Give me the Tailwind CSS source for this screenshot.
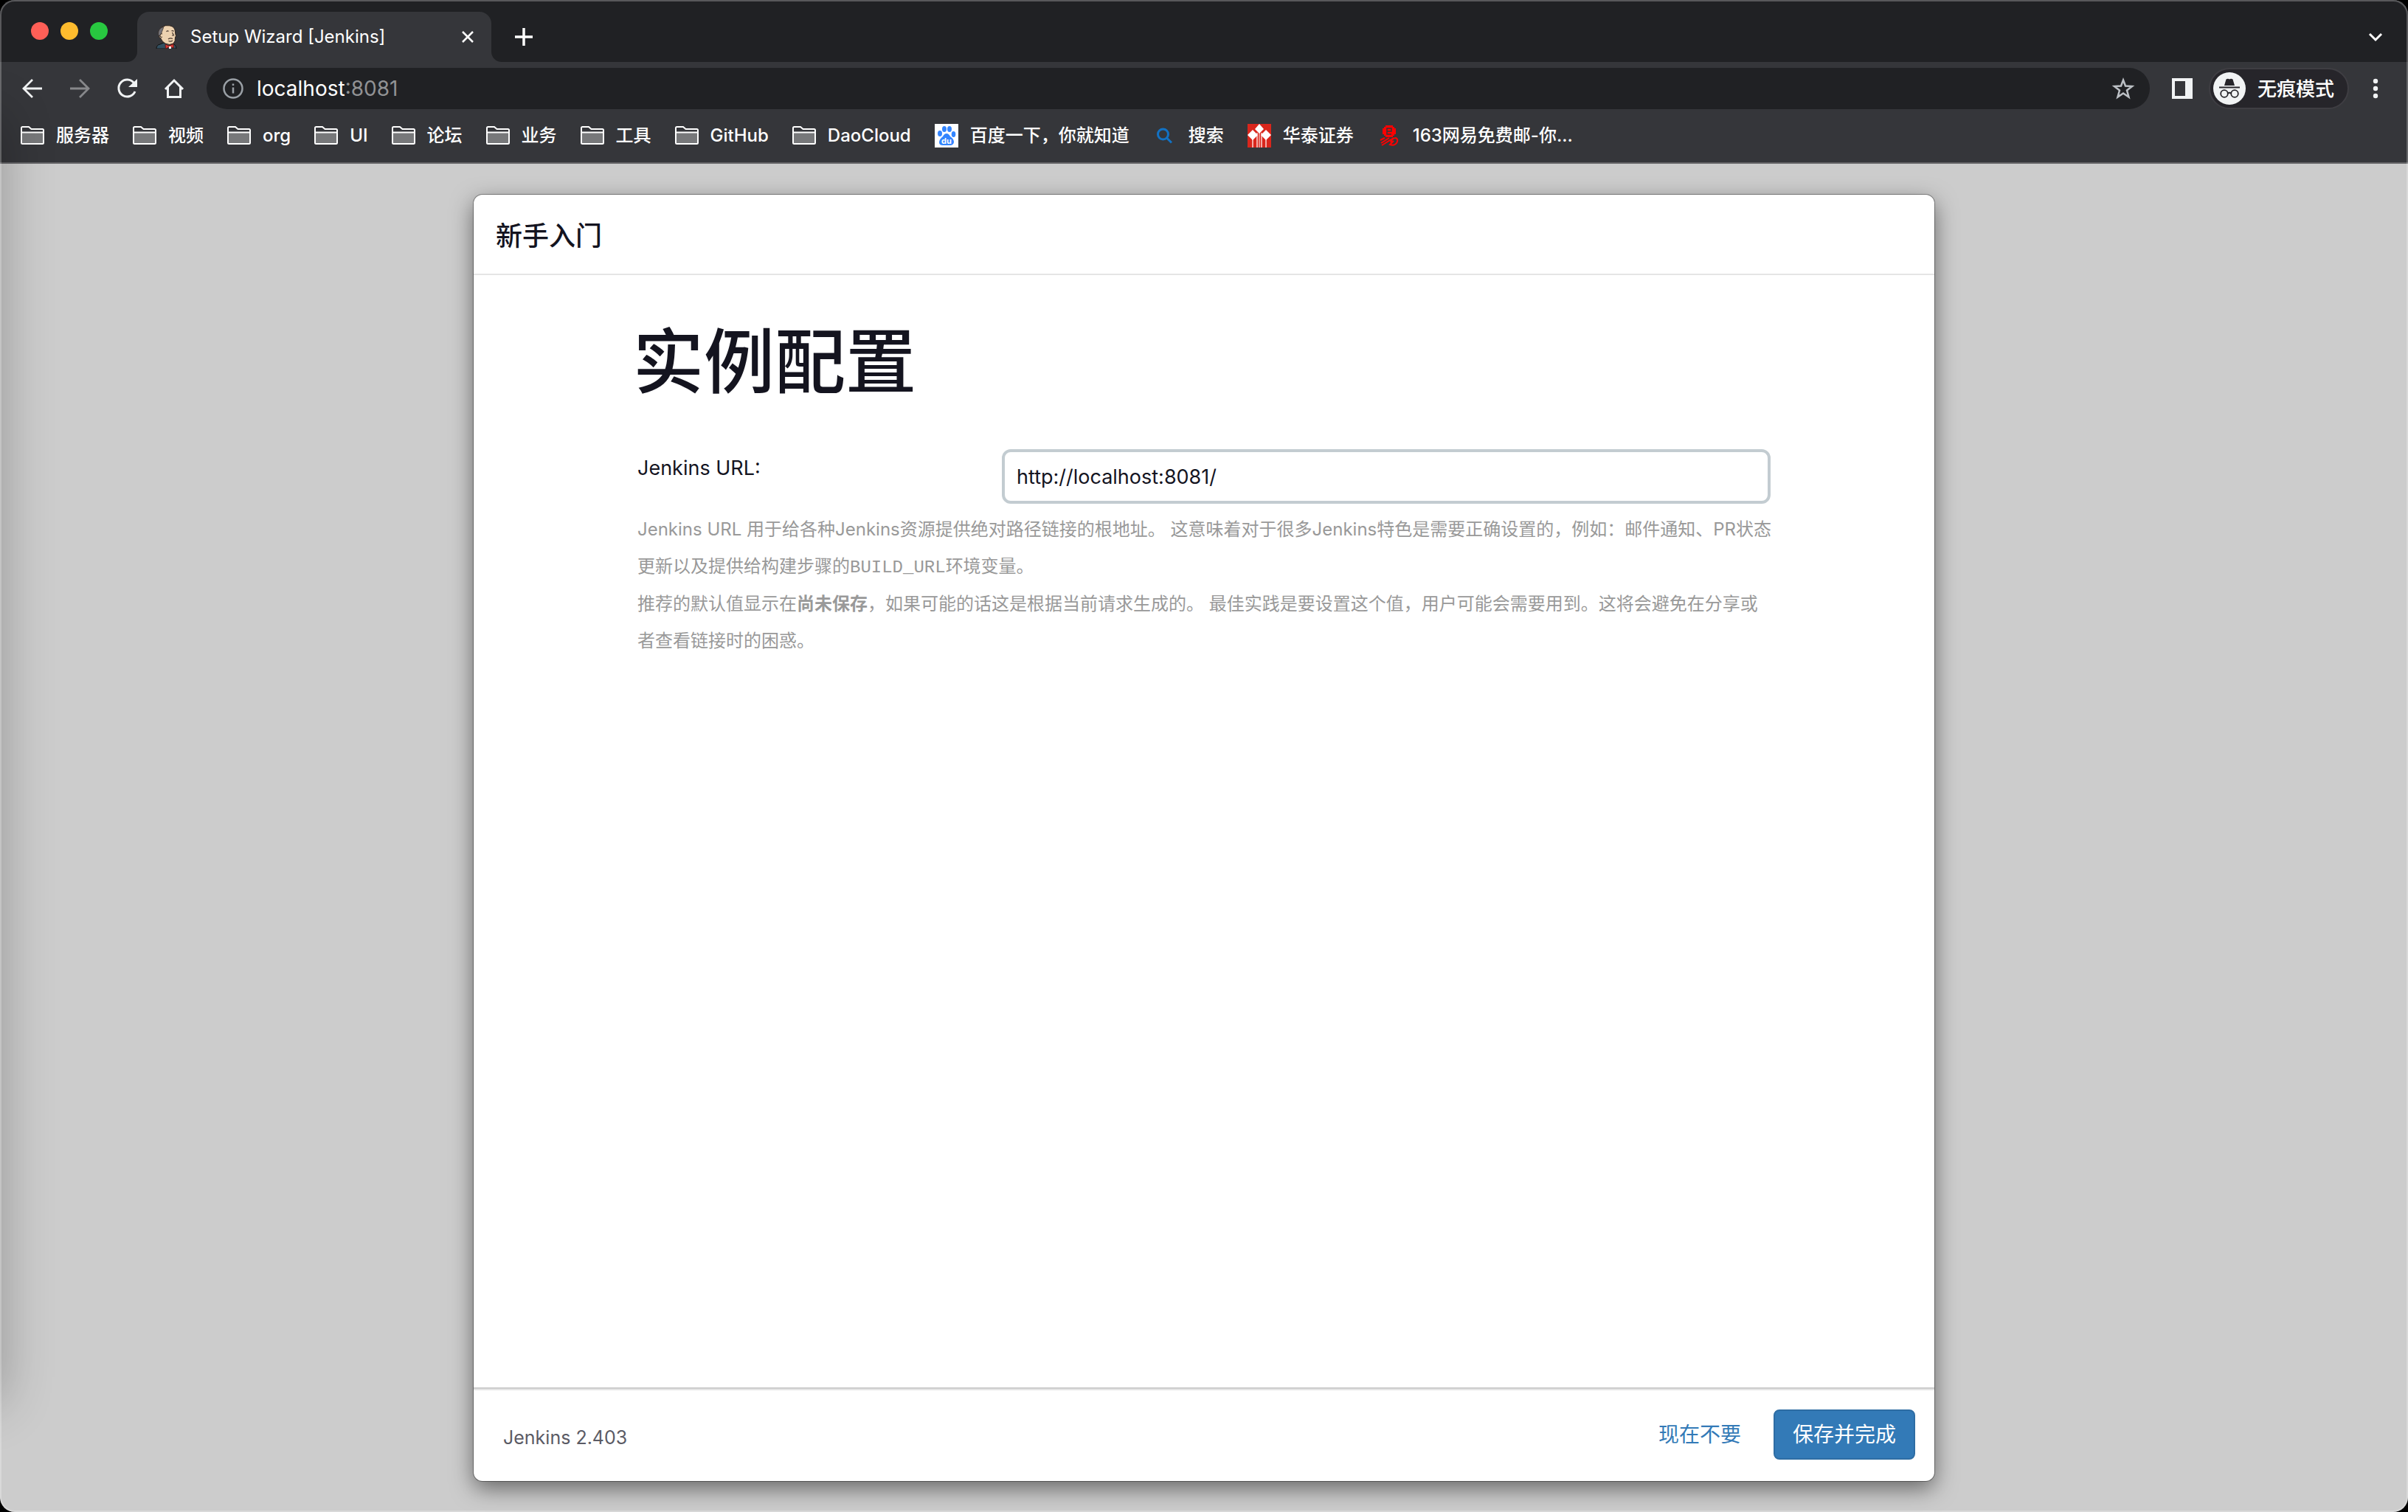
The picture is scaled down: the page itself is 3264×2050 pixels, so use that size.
<!DOCTYPE html>
<html lang="zh-CN">
<head>
<meta charset="utf-8">
<title>Setup Wizard [Jenkins]</title>
<script src="https://cdn.jsdelivr.net/npm/@tailwindcss/browser@4"></script>
</head>
<body class="bg-black font-['Inter','Noto_Sans_CJK_SC',sans-serif]">
<svg class="hidden">
  <symbol id="folder" viewBox="0 0 32 32">
    <path d="M2 12h28v14H2z" fill="#77787a"/>
    <path d="M1 5.500Q1 4 2.500 4H11l3.500 3H29.500Q31 7 31 8.500V25.500Q31 27 29.500 27H2.500Q1 27 1 25.500ZM1 11.500H31" fill="none" stroke="#fff" stroke-width="2"/>
  </symbol>
</svg>

<div class="relative flex h-screen min-h-[900px] flex-col overflow-hidden rounded-[20px] bg-[#cccccc]">
  <header class="shrink-0 border-b-2 border-[#636366] bg-[#35363a] text-white">
    <!-- Tab strip -->
    <div class="flex h-[84px] items-center bg-[#202124] pl-[42px] pr-8">
      <div class="mr-[26px] flex gap-4">
        <button aria-label="关闭窗口" class="size-6 rounded-full bg-[#ff5f57]"></button>
        <button aria-label="最小化" class="size-6 rounded-full bg-[#febc2e]"></button>
        <button aria-label="全屏" class="size-6 rounded-full bg-[#28c840]"></button>
      </div>
      <svg class="size-[14px] self-end" viewBox="0 0 14 14"><path d="M0 14A14 14 0 0 0 14 0V14Z" fill="#35363a"/></svg>
      <div class="flex h-[68px] w-[480px] items-center self-end rounded-t-2xl bg-[#35363a] pl-6 pr-[22px]">
        <svg class="size-8" viewBox="0 0 32 32">
          <path d="M2 32Q2 27 7 26L12 24 20 26 26 26Q29 28 29 32Z" fill="#335061" stroke="#111" stroke-width="1"/>
          <path d="M6 13Q5 7 9 3Q14-.5 20 .8Q27 2 27.500 9Q27.500 12 28.500 14.500L27.500 17Q28 22 25 25Q20 28 14 25Q9 22 8 18Q5 17 5.500 14Z" fill="#edd2b0" stroke="#2b211b" stroke-width="1"/>
          <path d="M12 2.500Q4 4 4.500 13L7.500 16 9.500 9Z" fill="#77757a" stroke="#2b211b" stroke-width=".6"/>
          <path d="M10 12Q7 11 7 14.500Q8 18 10 16" fill="#edd2b0" stroke="#2b211b" stroke-width="1"/>
          <path d="M15.500 9Q17 7 18.500 8.500M22.500 8Q24 7 25.500 8.500M23.500 10L25.500 14H23M18 19Q21 17 24 18.500M18.500 21.500Q21 23 24 21" fill="none" stroke="#4a3a30" stroke-width="1.200"/>
          <path d="M14 26L19 28 25 25.500 25.500 31 20 29.500 14.500 32Z" fill="#d33833" stroke="#5a1512" stroke-width=".8"/>
          <path d="M19 29L22 29 22 32H19Z" fill="#fff"/>
        </svg>
        <span class="ml-4 flex-1 text-2xl">Setup Wizard [Jenkins]</span>
        <button aria-label="关闭标签页"><svg class="size-5" viewBox="0 0 20 20"><path d="M3 3L17 17M17 3L3 17" stroke="#fff" stroke-width="2.500"/></svg></button>
      </div>
      <svg class="size-[14px] self-end" viewBox="0 0 14 14"><path d="M14 14A14 14 0 0 1 0 0V14Z" fill="#35363a"/></svg>
      <button aria-label="新标签页" class="ml-[18px] mt-4"><svg class="size-6" viewBox="0 0 24 24"><path d="M12 0V24M0 12H24" stroke="#fff" stroke-width="3.500"/></svg></button>
      <button aria-label="搜索标签页" class="ml-auto mt-4"><svg class="size-6" viewBox="0 0 24 24"><path d="M4 8L12 16 20 8" fill="none" stroke="#fff" stroke-width="3"/></svg></button>
    </div>

    <!-- Toolbar -->
    <div class="flex h-[72px] items-center px-7">
      <nav class="flex gap-8">
        <button aria-label="后退"><svg class="size-8" viewBox="0 0 32 32"><path d="M29 16H4M16 4L4 16 16 28" fill="none" stroke="#f1f3f4" stroke-width="2.800"/></svg></button>
        <button aria-label="前进"><svg class="size-8" viewBox="0 0 32 32"><path d="M3 16H28M16 4L28 16 16 28" fill="none" stroke="#87888b" stroke-width="2.800"/></svg></button>
        <button aria-label="重新加载"><svg class="size-8" viewBox="0 0 32 32"><path d="M25.500 8.500A11.500 11.500 0 1 0 27 20" fill="none" stroke="#f1f3f4" stroke-width="3"/><path d="M30 3V14H18Z" fill="#f1f3f4"/></svg></button>
        <button aria-label="主页"><svg class="size-8" viewBox="0 0 32 32"><path d="M4 17L16 5 28 17M7.500 14V27.500H24.500V14" fill="none" stroke="#f1f3f4" stroke-width="3"/></svg></button>
      </nav>
      <div class="ml-7 flex h-14 min-w-0 flex-1 items-center rounded-full bg-[#202124] pl-[22px] pr-5">
        <svg class="size-7" viewBox="0 0 28 28"><circle cx="14" cy="14" r="12.500" fill="none" stroke="#9aa0a6" stroke-width="2.500"/><path d="M14 12.500V20.500M14 7.500V10" stroke="#9aa0a6" stroke-width="2.500"/></svg>
        <label class="ml-[18px] flex flex-1 items-center text-[28px]">
          <input type="text" aria-label="地址栏" value="localhost" class="field-sizing-content text-white outline-none">
          <span class="text-[#919294]">:8081</span>
        </label>
        <button aria-label="收藏此网页"><svg class="size-8" viewBox="0 0 32 32"><path d="M16 4.500L19 12.500 28 13 21 18.500 23.500 27.500 16 22.500 8.500 27.500 11 18.500 4 13 13 12.500Z" fill="none" stroke="#bdc1c6" stroke-width="2.500"/></svg></button>
      </div>
      <button aria-label="侧边栏" class="ml-[30px]"><svg class="size-7" viewBox="0 0 28 28"><path d="M0 0H28V28H0ZM4 4V24H18V4Z" fill="#f1f3f4" fill-rule="evenodd"/></svg></button>
      <button class="ml-[22px] flex h-14 w-[190px] items-center rounded-full border-2 border-[#3f3e43] bg-[#26252a] pl-1 text-[26px] font-medium">
        <svg class="size-11" viewBox="0 0 44 44"><circle cx="22" cy="22" r="22" fill="#f1f3f4"/><path d="M15 18L17.500 9.500Q20 8 22 9.500Q24 8 26.500 9.500L29 18Z" fill="#26252a"/><path d="M8 20.500H36" stroke="#26252a" stroke-width="2"/><g fill="none" stroke="#26252a" stroke-width="1.800"><circle cx="15" cy="29" r="4.800"/><circle cx="29" cy="29" r="4.800"/><path d="M19.500 28.500Q22 27 24.500 28.500"/></g></svg>
        <span class="ml-4 whitespace-nowrap">无痕模式</span>
      </button>
      <button aria-label="菜单" class="ml-5"><svg class="size-8" viewBox="0 0 32 32" fill="#f1f3f4"><circle cx="16" cy="6" r="3.200"/><circle cx="16" cy="16" r="3.200"/><circle cx="16" cy="26" r="3.200"/></svg></button>
    </div>

    <!-- Bookmarks -->
    <nav class="flex h-16 items-center gap-8 whitespace-nowrap pb-2 pl-7 text-2xl font-medium leading-8">
      <a href="#" class="flex items-center gap-4"><svg class="size-8"><use href="#folder"/></svg>服务器</a>
      <a href="#" class="flex items-center gap-4"><svg class="size-8"><use href="#folder"/></svg>视频</a>
      <a href="#" class="flex items-center gap-4"><svg class="size-8"><use href="#folder"/></svg>org</a>
      <a href="#" class="flex items-center gap-4"><svg class="size-8"><use href="#folder"/></svg>UI</a>
      <a href="#" class="flex items-center gap-4"><svg class="size-8"><use href="#folder"/></svg>论坛</a>
      <a href="#" class="flex items-center gap-4"><svg class="size-8"><use href="#folder"/></svg>业务</a>
      <a href="#" class="flex items-center gap-4"><svg class="size-8"><use href="#folder"/></svg>工具</a>
      <a href="#" class="flex items-center gap-4"><svg class="size-8"><use href="#folder"/></svg>GitHub</a>
      <a href="#" class="flex items-center gap-4"><svg class="size-8"><use href="#folder"/></svg>DaoCloud</a>
      <a href="#" class="flex items-center gap-4">
        <svg class="size-8" viewBox="0 0 32 32"><path d="M0 0H32V32H0Z" fill="#fff"/><g fill="#3385ff"><ellipse cx="7" cy="13" rx="3" ry="4"/><ellipse cx="13" cy="7" rx="3" ry="4"/><ellipse cx="20" cy="7" rx="3" ry="4"/><ellipse cx="25.500" cy="14" rx="2.800" ry="4"/><path d="M16 13Q19 13 21 17Q26 20 26 25Q25 29 21 29H11Q6 29 6 25Q6 21 11 17Q13 13 16 13Z"/></g><text x="16" y="27" text-anchor="middle" font-size="11" font-weight="700" fill="#fff">du</text></svg>百度一下，你就知道</a>
      <a href="#" class="flex items-center gap-4"><svg class="size-8" viewBox="0 0 32 32" fill="none" stroke="#1272c4" stroke-width="3"><circle cx="13.500" cy="14" r="7"/><path d="M18.500 19L25 25.500"/></svg>搜索</a>
      <a href="#" class="flex items-center gap-4"><svg class="size-8" viewBox="0 0 32 32"><path d="M0 0H32V32H0Z" fill="#d9261c"/><path d="M7 15V32M13 12V32M19 12V32M25 15V32" stroke="#f3aaa5" stroke-width="2"/><path d="M15 12H17V32H15Z" fill="#eb8a84"/><path d="M0 15L7 8 14 15 7 22ZM18 15L25 8 32 15 25 22ZM10 7L16 0 22 7 16 13Z" fill="#fff"/></svg>华泰证券</a>
      <a href="#" class="flex items-center gap-4"><svg class="size-8" viewBox="0 0 32 32"><path d="M11 2H21V4H23V6H25V14H23V16H21V18H11V16H9V14H7V6H9V4H11Z" fill="#f00"/><path d="M13 10H19V6H13V14H19" fill="none" stroke="#35363a" stroke-width="1.500"/><path d="M10 19L4 22M16 19L5 26M22 19L6 29M18 25Q20 19 25 19Q29 21 26 26Q23 30 17 28L22 23" fill="none" stroke="#f00" stroke-width="2"/></svg>163网易免费邮-你...</a>
    </nav>
  </header>

  <!-- Setup wizard -->
  <main class="flex min-h-0 flex-1 flex-col px-4 py-[42px] text-[#14141f]">
    <section class="mx-auto flex w-full max-w-[1980px] flex-1 flex-col rounded-xl bg-white shadow-[0_0_0_1px_rgba(0,0,0,0.35),0_10px_30px_rgba(0,0,0,0.5)]">
      <div class="flex h-[109px] shrink-0 items-center border-b-2 border-[#e5e5e5] px-[30px] pt-1">
        <h4 class="text-4xl font-medium">新手入门</h4>
      </div>
      <form class="mx-auto w-full max-w-[1536px] flex-1">
        <h1 class="-ml-1.5 mt-[57px] text-[96px] font-medium leading-[120px]">实例配置</h1>
        <div class="mt-[59px] grid grid-cols-[494px_1fr] text-[27px]">
          <label for="root-url" class="pt-[6px] leading-10">Jenkins URL:</label>
          <input id="root-url" type="text" value="http://localhost:8081/" class="h-[74px] w-full rounded-xl border-4 border-[#c3ccd1] bg-white px-4 outline-none">
        </div>
        <div class="-mr-1 mt-[10px] flex flex-col gap-px text-2xl leading-[50px] text-[#999999]">
          <p>Jenkins URL 用于给各种Jenkins资源提供绝对路径链接的根地址。 这意味着对于很多Jenkins特色是需要正确设置的，例如：邮件通知、PR状态更新以及提供给构建步骤的<code class="font-['Liberation_Mono',monospace] text-2xl">BUILD_URL</code>环境变量。</p>
          <p>推荐的默认值显示在<strong class="font-bold">尚未保存</strong>，如果可能的话这是根据当前请求生成的。 最佳实践是要设置这个值，用户可能会需要用到。这将会避免在分享或者查看链接时的困惑。</p>
        </div>
      </form>
      <footer class="flex h-[127px] shrink-0 items-center border-t-2 border-[#cccccc] pb-[2px] pl-10 pr-[26px] shadow-[inset_0_2px_0_#e5e5e5]">
        <span class="mt-2.5 text-[25px] text-[#5b5b65]">Jenkins 2.403</span>
        <a href="#" class="ml-auto text-[28px] text-[#337ab7]">现在不要</a>
        <button class="ml-11 h-[68px] rounded-lg border-2 border-[#2e6da4] bg-[#337ab7] px-6 text-[28px] text-white">保存并完成</button>
      </footer>
    </section>
  </main>

  <div class="pointer-events-none absolute -left-[60px] bottom-[150px] top-[160px] w-[60px] shadow-[0_0_70px_rgba(0,0,0,0.3)]"></div>
  <div class="pointer-events-none absolute inset-0 rounded-[20px] border-2 border-white/25"></div>
</div>
</body>
</html>
